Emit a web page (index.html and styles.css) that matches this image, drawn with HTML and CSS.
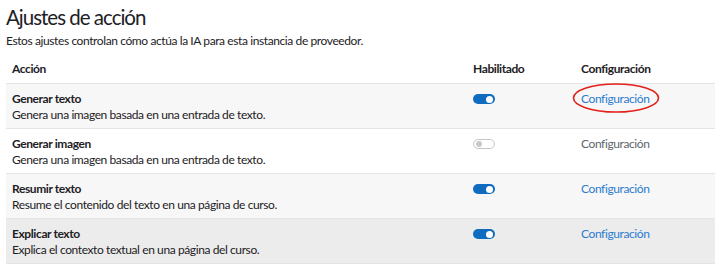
FILE: index.html
```html
<!DOCTYPE html>
<html lang="es">
<head>
<meta charset="utf-8">
<link rel="stylesheet" href="styles.css">
</head>
<body>
<div class="page">
  <h2 class="title">Ajustes de acción</h2>
  <p class="intro">Estos ajustes controlan cómo actúa la IA para esta instancia de proveedor.</p>
  <div class="table">
    <div class="row head">
      <div class="cell">Acción</div>
      <div class="cell">Habilitado</div>
      <div class="cell">Configuración</div>
    </div>
    <div class="row striped">
      <div class="cell"><div class="name">Generar texto</div><div class="desc">Genera una imagen basada en una entrada de texto.</div></div>
      <div class="cell"><span class="toggle on"></span></div>
      <div class="cell marked"><a class="link" href="#">Configuración</a>
        <svg class="circle" width="90" height="32" viewBox="0 0 90 32"><ellipse cx="45" cy="16" rx="42.5" ry="14" fill="none" stroke="#e2201c" stroke-width="1.6"/></svg>
      </div>
    </div>
    <div class="row">
      <div class="cell"><div class="name">Generar imagen</div><div class="desc">Genera una imagen basada en una entrada de texto.</div></div>
      <div class="cell"><span class="toggle off"></span></div>
      <div class="cell"><span class="link disabled">Configuración</span></div>
    </div>
    <div class="row striped">
      <div class="cell"><div class="name">Resumir texto</div><div class="desc">Resume el contenido del texto en una página de curso.</div></div>
      <div class="cell"><span class="toggle on"></span></div>
      <div class="cell"><a class="link" href="#">Configuración</a></div>
    </div>
    <div class="row hover">
      <div class="cell"><div class="name">Explicar texto</div><div class="desc">Explica el contexto textual en una página del curso.</div></div>
      <div class="cell"><span class="toggle on"></span></div>
      <div class="cell"><a class="link" href="#">Configuración</a></div>
    </div>
  </div>
</div>
</body>
</html>
```

FILE: styles.css
```css
html, body {
  margin: 0;
  padding: 0;
  background: #fff;
}
body {
  font-family: "Lato", "Open Sans", sans-serif;
  color: #1d2125;
  font-size: 12px;
  letter-spacing: -0.4px;
}
.page {
  padding: 0 5px 0 6px;
}
.title {
  margin: 0;
  padding-top: 3px;
  font-size: 20.5px;
  font-weight: 400;
  line-height: 28px;
  letter-spacing: -1px;
}
.intro {
  margin: 2px 0 0 0;
  line-height: 16px;
}
.table {
  margin-top: 5px;
}
.row {
  display: grid;
  grid-template-columns: 461px 108px 1fr;
  border-bottom: 1px solid #e3e4e6;
  min-height: 44px;
}
.row.head {
  min-height: 0;
}
.row.head .cell {
  font-weight: 700;
  padding: 7px 6px 6px 6px;
  line-height: 16px;
}
.row.striped {
  background: #f7f7f7;
}
.row.hover {
  background: #ececec;
}
.cell {
  padding: 7px 6px 0 6px;
  line-height: 16px;
  position: relative;
}
.name {
  font-weight: 700;
}
.toggle {
  display: inline-block;
  width: 22px;
  height: 10px;
  border-radius: 6px;
  margin-top: 3px;
  position: relative;
  box-sizing: border-box;
}
.toggle.on {
  background: #0f6cbf;
}
.toggle.on::after {
  content: "";
  position: absolute;
  right: 2px;
  top: 1.5px;
  width: 7px;
  height: 7px;
  border-radius: 50%;
  background: #fff;
}
.toggle.off {
  background: #fff;
  border: 1px solid #c5c7ca;
}
.toggle.off::after {
  content: "";
  position: absolute;
  left: 2px;
  top: 1px;
  width: 6px;
  height: 6px;
  border-radius: 50%;
  background: #c9c9cb;
}
.link {
  color: #2b7bd0;
  text-decoration: none;
}
.link.disabled {
  color: #5e656c;
}
.circle {
  position: absolute;
  left: -4px;
  top: -2px;
}
```
